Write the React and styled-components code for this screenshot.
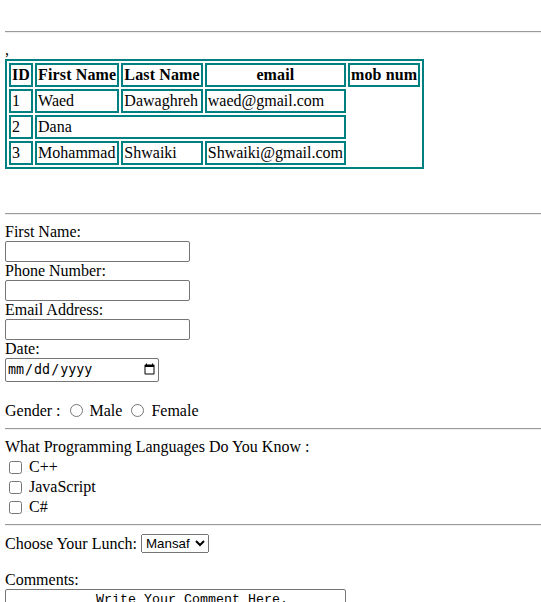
import React from "react";
import styled, { createGlobalStyle } from "styled-components";

const GlobalStyle = createGlobalStyle`
  html, body {
    margin: 0;
    background: #fff;
    overflow: hidden;
  }
  body {
    font-family: "Liberation Serif", "Times New Roman", serif;
    font-size: 16px;
    color: #000;
  }
`;

// data
const people = [
  { id: 1, first: "Waed", last: "Dawaghreh", email: "waed@gmail.com" },
  { id: 2, first: "Dana", span: true },
  { id: 3, first: "Mohammad", last: "Shwaiki", email: "Shwaiki@gmail.com" },
];

const languages = ["C++", "JavaScript", "C#"];

const App = () => {
  return (
    <Page>
      <GlobalStyle />
      <Rule />
      <Line>,</Line>
      <Table>
        <thead>
          <tr>
            <Th>ID</Th>
            <Th>First Name</Th>
            <Th>Last Name</Th>
            <Th>email</Th>
            <Th>mob num</Th>
          </tr>
        </thead>
        <tbody>
          {people.map((p) =>
            p.span ? (
              <tr key={p.id}>
                <Td>{p.id}</Td>
                <Td colSpan={3}>{p.first}</Td>
              </tr>
            ) : (
              <tr key={p.id}>
                <Td>{p.id}</Td>
                <Td>{p.first}</Td>
                <Td>{p.last}</Td>
                <Td>{p.email}</Td>
              </tr>
            )
          )}
        </tbody>
      </Table>
      <Blank size={36} />
      <Rule />

      <Form>
        <Line>First Name:</Line>
        <TextInput type="text" />
        <Line>Phone Number:</Line>
        <TextInput type="text" />
        <Line>Email Address:</Line>
        <TextInput type="text" />
        <Line>Date:</Line>
        <DateInput type="date" />
        <Blank size={19} />
        <Line>
          Gender : <Radio type="radio" name="gender" /> Male{" "}
          <Radio type="radio" name="gender" /> Female
        </Line>
        <Rule />
        <Question>What Programming Languages Do You Know :</Question>
        {languages.map((lang) => (
          <CheckRow key={lang}>
            <Check type="checkbox" /> {lang}
          </CheckRow>
        ))}
        <Rule tight />
        <Line>
          Choose Your Lunch:{" "}
          <Select defaultValue="Mansaf">
            <option>Mansaf</option>
            <option>Kabsa</option>
          </Select>
        </Line>
        <Blank size={18} />
        <Line>Comments:</Line>
        <Comment
          rows={4}
          defaultValue={"           Write Your Comment Here."}
        />
      </Form>
    </Page>
  );
};

const Page = styled.div`
  padding: 23px 0 0 5px;
`;

const Rule = styled.hr`
  margin: ${({ tight }) => (tight ? "7px 0 8px" : "8px 0")};
  border: none;
  border-top: 1px solid #9a9a9a;
  border-bottom: 1px solid #eeeeee;
  height: 0;
`;

const Line = styled.div`
  line-height: 18px;
  min-height: 18px;
`;

const Question = styled(Line)`
  margin-bottom: 1px;
`;

const Blank = styled.div`
  height: ${({ size }) => size}px;
`;

const Table = styled.table`
  border: 2px solid #008080;
  border-spacing: 2px;
  font-size: 16px;
`;

const Th = styled.th`
  border: 2px solid #008080;
  padding: 1px;
  line-height: 18px;
  font-weight: bold;
  letter-spacing: 0.14px;
`;

const Td = styled.td`
  border: 2px solid #008080;
  padding: 1px;
  line-height: 18px;
`;

const Form = styled.div`
  display: flex;
  flex-direction: column;
  align-items: flex-start;
  width: 100%;

  hr {
    align-self: stretch;
  }
`;

const TextInput = styled.input`
  box-sizing: border-box;
  width: 185px;
  height: 21px;
  margin: 0;
  border: 1px solid #767676;
  border-radius: 2px;
  padding: 1px 2px;
`;

const DateInput = styled.input`
  box-sizing: border-box;
  width: 154px;
  height: 24px;
  margin: 0;
  border: 1px solid #767676;
  border-radius: 2px;
  font-family: "DejaVu Sans Mono", monospace;
  font-size: 13.33px;
`;

const Radio = styled.input`
  margin: 3px 3px 0 5px;
  width: 13px;
  height: 13px;
  vertical-align: -1px;
`;

const CheckRow = styled.label`
  display: flex;
  align-items: center;
  height: 20px;
  gap: 4px;
`;

const Check = styled.input`
  margin: 3px 3px 3px 4px;
  width: 13px;
  height: 13px;
`;

const Select = styled.select`
  width: 68px;
  height: 19px;
  font-family: "Liberation Sans", Arial, sans-serif;
  font-size: 13.33px;
  vertical-align: 1px;
`;

const Comment = styled.textarea`
  box-sizing: border-box;
  width: 341px;
  height: 60px;
  margin: 0;
  padding: 2px;
  border: 1px solid #767676;
  border-radius: 2px;
  font-family: "Liberation Mono", "Courier New", monospace;
  font-size: 13.33px;
  resize: none;
`;

export default App;
